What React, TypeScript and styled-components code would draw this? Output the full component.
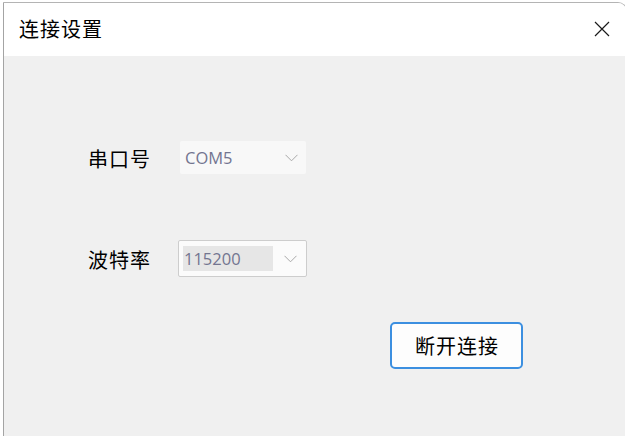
import styled, { createGlobalStyle } from 'styled-components';

const GlobalStyle = createGlobalStyle`
  html, body {
    margin: 0;
    padding: 0;
    background: #ffffff;
    overflow: hidden;
  }
  body {
    font-family: "Noto Sans CJK SC", "Noto Sans", sans-serif;
  }
`;

function ChevronDown() {
  return (
    <svg width="13" height="8" viewBox="0 0 13 8" fill="none">
      <path d="M0.5 0.8 L6.5 6.8 L12.5 0.8" stroke="#a8a8a8" strokeWidth="1" />
    </svg>
  );
}

function CloseIcon() {
  return (
    <svg width="16" height="16" viewBox="0 0 16 16" fill="none">
      <path d="M1 1 L15 15 M15 1 L1 15" stroke="#1a1a1a" strokeWidth="1.2" />
    </svg>
  );
}

export default function App() {
  return (
    <>
      <GlobalStyle />
      <Window>
        <TitleBar>
          <Title>连接设置</Title>
          <CloseButton type="button" aria-label="关闭">
            <CloseIcon />
          </CloseButton>
        </TitleBar>
        <Body>
          <Row $height={33}>
            <Label>串口号</Label>
            <Combo $bordered={false}>
              <ComboText $selected={false}>COM5</ComboText>
              <ChevronDown />
            </Combo>
          </Row>
          <Row $height={37} style={{ marginTop: 66 }}>
            <Label>波特率</Label>
            <Combo $bordered>
              <ComboText $selected>115200</ComboText>
              <ChevronDown />
            </Combo>
          </Row>
          <Actions>
            <Button type="button">断开连接</Button>
          </Actions>
        </Body>
      </Window>
    </>
  );
}

const Window = styled.div`
  margin: 2px 0 0 3px;
  width: 624px;
  height: 434px;
  border-left: 1px solid #a4a4a4;
  border-top: 1px solid #b4b4b4;
  border-right: 1px solid #b4b4b4;
  border-top-right-radius: 9px;
  box-sizing: border-box;
  display: flex;
  flex-direction: column;
  overflow: hidden;
  background: #f0f0f0;
`;

const TitleBar = styled.div`
  height: 53px;
  background: #ffffff;
  display: flex;
  align-items: center;
  justify-content: space-between;
  padding: 0 16px 0 15px;
  flex-shrink: 0;
`;

const Title = styled.span`
  font-size: 20px;
  color: #000;
  letter-spacing: 1px;
  margin-top: -2px;
`;

const CloseButton = styled.button`
  border: none;
  background: transparent;
  padding: 0;
  width: 16px;
  height: 16px;
  display: flex;
  margin-top: -2px;
`;

const Body = styled.div`
  flex: 1;
  padding: 85px 0 0 84px;
  display: flex;
  flex-direction: column;
`;

const Row = styled.div<{ $height: number }>`
  display: flex;
  align-items: center;
  height: ${(p) => p.$height}px;
`;

const Label = styled.span`
  width: 91px;
  font-size: 20px;
  color: #000;
  letter-spacing: 1px;
  margin-top: 2px;
`;

const Combo = styled.div<{ $bordered: boolean }>`
  box-sizing: border-box;
  height: 100%;
  width: ${(p) => (p.$bordered ? 129 : 126)}px;
  margin-left: ${(p) => (p.$bordered ? -1 : 1)}px;
  background: ${(p) => (p.$bordered ? '#fbfbfb' : '#f8f8f8')};
  border: ${(p) => (p.$bordered ? '1px solid #cdcdcd' : 'none')};
  border-radius: 2px;
  display: flex;
  align-items: center;
  justify-content: space-between;
  padding: ${(p) => (p.$bordered ? '0 9px 0 4px' : '0 8px 0 5px')};
`;

const ComboText = styled.span<{ $selected: boolean }>`
  font-family: "Open Sans", "Noto Sans", sans-serif;
  font-size: 16.5px;
  color: #737590;
  background: ${(p) => (p.$selected ? '#e6e6e6' : 'transparent')};
  width: ${(p) => (p.$selected ? '90px' : 'auto')};
  height: ${(p) => (p.$selected ? '25px' : 'auto')};
  line-height: 25px;
  padding-left: ${(p) => (p.$selected ? '1px' : '0')};
  box-sizing: border-box;
`;

const Actions = styled.div`
  display: flex;
  margin-top: 45px;
  padding-left: 302px;
`;

const Button = styled.button`
  width: 133px;
  height: 47px;
  border: 2px solid #3c8fe0;
  border-radius: 5px;
  background: #fdfdfd;
  font-family: "Noto Sans CJK SC", sans-serif;
  font-size: 20px;
  color: #000;
  letter-spacing: 1px;
  padding: 0 0 0 1px;
`;
